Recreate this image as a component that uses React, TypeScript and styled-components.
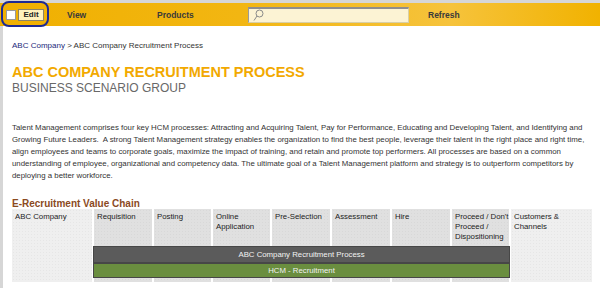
import styled, { createGlobalStyle } from "styled-components";

const GlobalStyle = createGlobalStyle`
  html, body {
    margin: 0;
    padding: 0;
    background: #ffffff;
  }
  body {
    font-family: "Liberation Sans", Arial, sans-serif;
  }
`;

const Page = styled.div`
  width: 600px;
  height: 288px;
  overflow: hidden;
  background: #d6d6d6;
  padding-top: 3px;
  box-sizing: border-box;
  display: flex;
  flex-direction: column;
`;

const Nav = styled.div`
  position: relative;
  height: 23px;
  flex-shrink: 0;
  display: grid;
  grid-template-columns: 67px 90px 91px 180px auto;
  align-items: center;
  background: linear-gradient(to right, #f0b000 0%, #f2b612 40%, #f6c33c 75%, #f1b200 100%);
`;

const EditGroup = styled.div`
  display: flex;
  align-items: center;
  gap: 2px;
  padding-left: 6px;
`;

const CheckBox = styled.span`
  width: 8px;
  height: 8px;
  background: #ffffff;
  border: 1px solid #9a9a9a;
`;

const EditButton = styled.span`
  height: 10px;
  width: 24px;
  display: flex;
  align-items: center;
  justify-content: center;
  background: #fff1bd;
  border: 1px solid #8c8366;
  font-size: 8px;
  font-weight: bold;
  color: #222;
`;

const Highlight = styled.span`
  position: absolute;
  left: 1px;
  top: -2px;
  width: 44px;
  height: 22px;
  border: 2px solid #1d2a93;
  border-radius: 8px;
  pointer-events: none;
`;

const NavLink = styled.span`
  font-size: 8.5px;
  font-weight: bold;
  color: #3a3a3a;
`;

const SearchBox = styled.div`
  width: 155px;
  height: 13px;
  display: flex;
  align-items: center;
  padding-left: 4px;
  box-sizing: content-box;
  background: #fcf3d4;
  border: 1px solid #d8cfa8;
  border-top: 2px solid #8e8e8e;
  border-left: 1px solid #9a9a9a;
`;

const Content = styled.div`
  flex: 1;
  margin-left: 3px;
  background: #ffffff;
  padding-left: 9px;
`;

const Breadcrumb = styled.div`
  margin-top: 15px;
  font-size: 8px;
  line-height: 10px;
  color: #333;
  a {
    color: #1b2a7a;
    text-decoration: none;
  }
`;

const Title = styled.h1`
  margin: 13px 0 0;
  font-size: 14.5px;
  line-height: 16px;
  font-weight: bold;
  color: #f2a900;
`;

const Subtitle = styled.h2`
  margin: 1px 0 0;
  font-size: 12px;
  line-height: 14px;
  font-weight: normal;
  color: #686868;
`;

const Paragraph = styled.p`
  margin: 27px 0 0;
  font-size: 7.85px;
  line-height: 12px;
  color: #333;
  white-space: nowrap;
`;

const SectionTitle = styled.h3`
  margin: 16px 0 0;
  font-size: 10px;
  line-height: 11px;
  font-weight: bold;
  color: #8b4a1e;
`;

const Chain = styled.div`
  display: grid;
  grid-template-columns: 80px 58px 57px 57px 58px 58px 58px 57px 81px;
  grid-template-rows: 37px 17px 15px 4px;
  column-gap: 2px;
`;

const Cell = styled.div<{ $side?: boolean; $col: number }>`
  grid-column: ${(p) => p.$col};
  grid-row: 1 / 5;
  padding: 3px 2px 0 3px;
  font-size: 7.8px;
  line-height: 10px;
  color: #222;
  white-space: nowrap;
  background-color: ${(p) => (p.$side ? "#efefef" : "#e0e0e0")};
  background-image: radial-gradient(
    ${(p) => (p.$side ? "#e6e6e6" : "#d8d8d8")} 0.6px,
    transparent 0.8px
  );
  background-size: 3px 3px;
`;

const Bar = styled.div<{ $row: number; $color: string }>`
  grid-column: 2 / 9;
  grid-row: ${(p) => p.$row};
  margin: 0 -1px;
  display: flex;
  align-items: center;
  justify-content: center;
  background: ${(p) => p.$color};
  border: 1px solid #474747;
  font-size: 7.8px;
  color: #f2f2f2;
`;

const steps: { label: React.ReactNode; side?: boolean }[] = [
  { label: "ABC Company", side: true },
  { label: "Requisition" },
  { label: "Posting" },
  {
    label: (
      <>
        Online
        <br />
        Application
      </>
    ),
  },
  { label: "Pre-Selection" },
  { label: "Assessment" },
  { label: "Hire" },
  {
    label: (
      <>
        Proceed / Don't
        <br />
        Proceed /
        <br />
        Dispositioning
      </>
    ),
  },
  {
    label: (
      <>
        Customers &amp;
        <br />
        Channels
      </>
    ),
    side: true,
  },
];

const SearchIcon = () => (
  <svg width="11" height="13" viewBox="0 0 11 13" fill="none">
    <circle cx="6.5" cy="4.5" r="3.5" stroke="#8a8a8a" strokeWidth="1" />
    <line x1="4" y1="7" x2="1" y2="11.5" stroke="#8a8a8a" strokeWidth="1" />
  </svg>
);

const App = () => {
  return (
    <>
      <GlobalStyle />
      <Page>
        <Nav>
          <EditGroup>
            <CheckBox />
            <EditButton>Edit</EditButton>
          </EditGroup>
          <NavLink>View</NavLink>
          <NavLink>Products</NavLink>
          <SearchBox>
            <SearchIcon />
          </SearchBox>
          <NavLink>Refresh</NavLink>
          <Highlight />
        </Nav>
        <Content>
          <Breadcrumb>
            <a href="#">ABC Company</a> &gt; ABC Company Recruitment Process
          </Breadcrumb>
          <Title>ABC COMPANY RECRUITMENT PROCESS</Title>
          <Subtitle>BUSINESS SCENARIO GROUP</Subtitle>
          <Paragraph>
            Talent Management comprises four key HCM processes: Attracting and
            Acquiring Talent, Pay for Performance, Educating and Developing
            Talent, and Identifying and
            <br />
            Growing Future Leaders.&nbsp; A strong Talent Management strategy
            enables the organization to find the best people, leverage their
            talent in the right place and right time,
            <br />
            align employees and teams to corporate goals, maximize the impact of
            training, and retain and promote top performers. All processes are
            based on a common
            <br />
            understanding of employee, organizational and competency data. The
            ultimate goal of a Talent Management platform and strategy is to
            outperform competitors by
            <br />
            deploying a better workforce.
          </Paragraph>
          <SectionTitle>E-Recruitment Value Chain</SectionTitle>
          <Chain>
            {steps.map((s, i) => (
              <Cell key={i} $col={i + 1} $side={s.side}>
                {s.label}
              </Cell>
            ))}
            <Bar $row={2} $color="#5b5b5b">
              ABC Company Recruitment Process
            </Bar>
            <Bar $row={3} $color="#6a8e3f">
              HCM - Recruitment
            </Bar>
          </Chain>
        </Content>
      </Page>
    </>
  );
};

export default App;
